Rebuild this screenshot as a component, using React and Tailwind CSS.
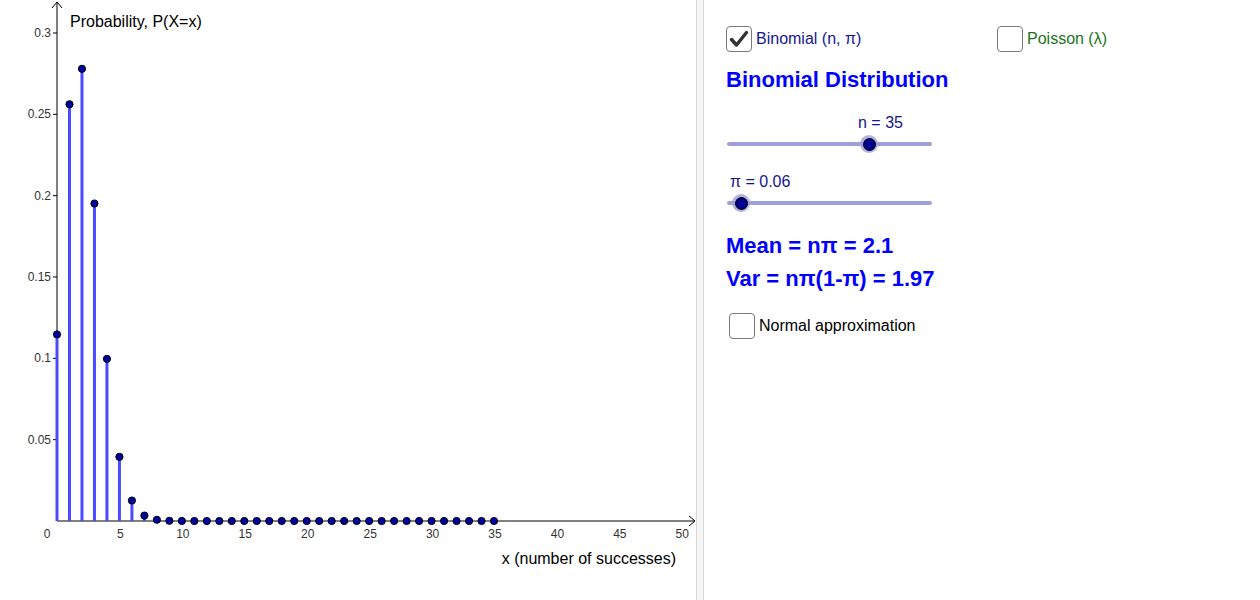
import React from 'react'

const N = 35
const P = 0.06

// binomial pmf for k = 0..n
const pmf = (() => {
  const out = [Math.pow(1 - P, N)]
  for (let k = 1; k <= N; k++) {
    out.push(out[k - 1] * ((N - k + 1) / k) * (P / (1 - P)))
  }
  return out
})()

const X0 = 57
const Y0 = 521
const SX = 12.486
const SY = 1626.7

const px = (x) => X0 + x * SX
const py = (y) => Y0 - y * SY

const Chart = () => {
  const yTicks = [0.05, 0.1, 0.15, 0.2, 0.25, 0.3]
  const xTicks = [5, 10, 15, 20, 25, 30, 35, 40, 45, 50]

  return (
    <svg width="696" height="600" className="block" style={{ fontFamily: '"Liberation Sans", Arial, sans-serif' }}>
      {/* axes */}
      <line x1={X0} y1={Y0} x2={X0} y2={2} stroke="#000" strokeWidth="1" />
      <polyline points={`${X0 - 5},8 ${X0},2 ${X0 + 5},8`} fill="none" stroke="#000" strokeWidth="1" />
      <line x1={X0} y1={Y0} x2={695} y2={Y0} stroke="#000" strokeWidth="1" />
      <polyline points={`689,${Y0 - 5} 695,${Y0} 689,${Y0 + 5}`} fill="none" stroke="#000" strokeWidth="1" />

      {yTicks.map((t) => (
        <g key={t}>
          <line x1={X0 - 4} y1={py(t)} x2={X0} y2={py(t)} stroke="#000" strokeWidth="1" />
          <text x={X0 - 6} y={py(t) + 4} textAnchor="end" fontSize="12" fill="#333">
            {t}
          </text>
        </g>
      ))}

      <text x={47} y={538} textAnchor="middle" fontSize="12" fill="#333">0</text>
      {xTicks.map((t) => (
        <text key={t} x={px(t) + 1} y={538} textAnchor="middle" fontSize="12" fill="#333">
          {t}
        </text>
      ))}

      <text x={70} y={27} fontSize="16" fill="#000">Probability, P(X=x)</text>
      <text x={676} y={564} textAnchor="end" fontSize="16" fill="#000">x (number of successes)</text>

      {/* stems */}
      {pmf.map((p, k) => (
        <line key={'s' + k} x1={px(k)} y1={Y0} x2={px(k)} y2={py(p)} stroke="#4a4aff" strokeWidth="3" />
      ))}
      {/* points */}
      {pmf.map((p, k) => (
        <circle key={'p' + k} cx={px(k)} cy={py(p)} r="3.6" fill="#0000a0" stroke="#000" strokeWidth="1" />
      ))}
    </svg>
  )
}

const CheckBox = ({ checked }) => (
  <div className="w-[26px] h-[26px] rounded-[4px] border-[1.5px] border-[#7a7a7a] bg-white flex items-center justify-center shrink-0">
    {checked && (
      <svg width="20" height="18" viewBox="0 0 20 18">
        <polyline points="2.5,9.5 7.5,15 17.5,2.5" fill="none" stroke="#333" strokeWidth="3.4" strokeLinecap="round" strokeLinejoin="round" />
      </svg>
    )}
  </div>
)

const Slider = ({ pos }) => (
  <div className="relative h-[16px] w-[205px] flex items-center">
    <div className="h-[4px] w-full rounded-full bg-[#9f9fdb]" />
    <div
      className="absolute top-1/2 -translate-x-1/2 -translate-y-1/2 w-[18px] h-[18px] rounded-full bg-[#9f9fdb]/80 flex items-center justify-center"
      style={{ left: pos }}
    >
      <div className="w-[13px] h-[13px] rounded-full bg-[#00008c] border border-black" />
    </div>
  </div>
)

export default function App() {
  return (
    <div className="flex w-[1260px] h-[600px] bg-white overflow-hidden" style={{ fontFamily: '"Liberation Sans", Arial, sans-serif' }}>
      <div className="w-[696px] shrink-0">
        <Chart />
      </div>

      {/* divider */}
      <div className="w-[8px] shrink-0 bg-[#f5f5f5] border-x border-[#d6d6d6]" />

      <div className="flex-1 pl-[22px] pt-[26px]">
        <div className="flex items-center h-[26px]">
          <div className="flex items-center gap-[4px] w-[271px]">
            <CheckBox checked />
            <span className="text-[16px] text-[#16169a]">Binomial (n, π)</span>
          </div>
          <div className="flex items-center gap-[4px]">
            <CheckBox />
            <span className="text-[16px] text-[#197519]">Poisson (λ)</span>
          </div>
        </div>

        <div className="mt-[15px] h-[26px] leading-[26px] text-[22px] font-bold text-[#0000ff]">
          Binomial Distribution
        </div>

        <div className="mt-[21px] h-[18px] leading-[18px] text-[16px] text-[#14148c] pl-[132px]">n = 35</div>
        <div className="mt-[4px] pl-[1px]">
          <Slider pos="142px" />
        </div>

        <div className="mt-[21px] h-[18px] leading-[18px] text-[16px] text-[#14148c] pl-[4px]">π = 0.06</div>
        <div className="mt-[4px] pl-[1px]">
          <Slider pos="14px" />
        </div>

        <div className="mt-[22px] h-[26px] leading-[26px] text-[22px] font-bold text-[#0000ff]">
          Mean = nπ = 2.1
        </div>
        <div className="mt-[7px] h-[26px] leading-[26px] text-[22px] font-bold text-[#0000ff]">
          Var = nπ(1-π) = 1.97
        </div>

        <div className="mt-[21px] ml-[3px] flex items-center gap-[4px]">
          <CheckBox />
          <span className="text-[16px] text-black">Normal approximation</span>
        </div>
      </div>
    </div>
  )
}
